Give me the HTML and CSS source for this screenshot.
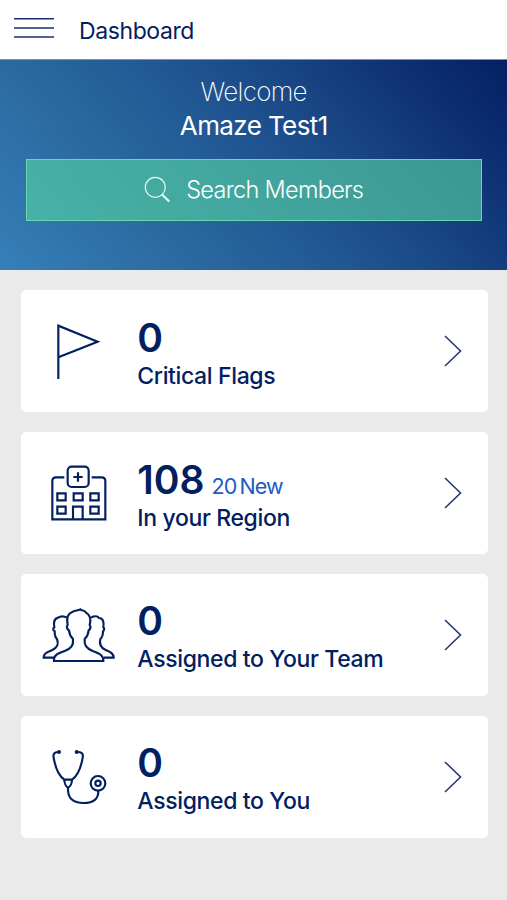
FILE: index.html
```html
<!DOCTYPE html>
<html lang="en">
<head>
  <meta charset="utf-8">
  <title>Dashboard</title>
  <link rel="stylesheet" href="styles.css">
</head>
<body>
  <header class="topbar">
    <svg class="menu" viewBox="0 0 40 22">
      <path d="M0 1.8h40M0 11h40M0 20h40" />
    </svg>
    <h1 class="title">Dashboard</h1>
  </header>

  <section class="hero">
    <p class="welcome">Welcome</p>
    <p class="name">Amaze Test1</p>
    <div class="search">
      <svg class="search-icon" viewBox="0 0 28 28">
        <circle cx="11.3" cy="11.3" r="10" stroke-width="1.2" />
        <path d="M18 18.5l7.3 7" stroke-width="2.2" />
      </svg>
      <span class="search-text">Search Members</span>
    </div>
  </section>

  <main class="cards">
    <div class="card">
      <svg class="icon" viewBox="60 93 240 210">
        <path d="M115 282V122L233 170L117 216" />
      </svg>
      <div class="info">
        <p class="count">0</p>
        <p class="label">Critical Flags</p>
      </div>
      <svg class="arrow" viewBox="0 0 18 32"><path d="M1 1l15.5 15L1 31" /></svg>
    </div>

    <div class="card">
      <svg class="icon" viewBox="30 24 240 210">
        <path d="M103 82H78Q67 82 67 93V208H226V93Q226 82 215 82H185" />
        <rect x="113" y="50" width="63" height="61" rx="12" />
        <path d="M144 67v28M130 81h28" />
        <path d="M82 130h25v21h-25zM131 130h27v21h-27zM181 130h25v21h-25z" />
        <path d="M82 170h25v21h-25zM181 170h25v21h-25zM129 208v-38h29v38" />
      </svg>
      <div class="info">
        <p class="count">108<span class="new">20<span>New</span></span></p>
        <p class="label">In your Region</p>
      </div>
      <svg class="arrow" viewBox="0 0 18 32"><path d="M1 1l15.5 15L1 31" /></svg>
    </div>

    <div class="card">
      <svg class="icon" viewBox="30 15 240 210">
        <path d="M72 198C70 180 84 175 104 168C124 160 131 151 129 132C122 125 118 117 117 106C110 102 109 94 113 90C109 70 113 55 128 50C138 46 145 47 151 43C155 48 166 45 168 53C180 60 184 72 179 90C183 96 181 102 176 106C175 117 170 126 164 132C162 150 168 159 188 168C208 175 221 181 220 198Z" />
        <path d="M72 188H41C41 174 53 171 67 165C83 157 87 148 81 132C76 128 74 119 74 109C68 106 69 99 73 97C70 81 72 71 84 68C93 62 102 63 111 68" />
        <path d="M221 188H251C250 174 240 171 227 165C211 158 207 148 211 132C217 127 219 119 219 109C224 105 223 99 220 97C223 80 218 69 207 69C203 62 192 63 183 68" />
      </svg>
      <div class="info">
        <p class="count">0</p>
        <p class="label">Assigned to Your Team</p>
      </div>
      <svg class="arrow" viewBox="0 0 18 32"><path d="M1 1l15.5 15L1 31" /></svg>
    </div>

    <div class="card">
      <svg class="icon" viewBox="30 21 240 210">
        <path d="M87 51C76 51 68 54 71 68C76 98 84 121 103 134H126C145 121 153 98 158 68C161 54 153 51 142 51" />
        <path d="M103 134C103 144 108 155 114 158C121 155 126 144 126 134" />
        <path d="M114 158C112 190 129 204 161 204C191 204 206 191 205 167" />
        <circle class="tip" cx="87" cy="51" r="6" />
        <circle class="tip" cx="140" cy="51" r="6" />
        <circle cx="204" cy="145" r="22" />
        <circle cx="204" cy="145" r="8" />
      </svg>
      <div class="info">
        <p class="count">0</p>
        <p class="label">Assigned to You</p>
      </div>
      <svg class="arrow" viewBox="0 0 18 32"><path d="M1 1l15.5 15L1 31" /></svg>
    </div>
  </main>
</body>
</html>
```
FILE: styles.css
```css
* {
  box-sizing: border-box;
}

body {
  margin: 0;
  min-height: 900px;
  background-color: #eaeaea;
  color: #02205f;
  font-family: Inter, "Liberation Sans", sans-serif;
}

p,
h1 {
  margin: 0;
}

svg {
  fill: none;
  stroke: #02205f;
  flex: none;
}

.topbar {
  display: flex;
  align-items: center;
  height: 59px;
  padding: 2px 13.5px 0;
  background-color: #fff;
}

.menu {
  width: 40px;
  height: 22px;
  margin: -5px 25.5px 0 0;
  stroke: #1b2f6e;
  stroke-width: 1.6;
}

.title {
  font-size: 23px;
  font-weight: 400;
  letter-spacing: -0.4px;
}

.hero {
  height: 211px;
  padding: 18px 25.5px 0 26px;
  border-top: 1px solid #6f93bb;
  background: linear-gradient(48deg, #367fb9 0%, #2a699f 29%, #215793 50%, #194685 66%, #143e7d 73%, #0c2d71 87%, #052063 100%);
  color: #fff;
  text-align: center;
}

.welcome {
  font-size: 26px;
  font-weight: 200;
  line-height: 28px;
  letter-spacing: -0.7px;
}

.name {
  margin-top: 5px;
  font-size: 26px;
  line-height: 30px;
  letter-spacing: -0.6px;
}

.search {
  display: flex;
  align-items: center;
  justify-content: center;
  height: 62px;
  margin-top: 18px;
  border: 1.5px solid #65d8ae;
  background-color: rgba(85, 211, 163, 0.63);
}

.search-icon {
  width: 28px;
  height: 28px;
  margin-right: 14px;
  stroke: #e8fbf5;
}

.search-text {
  margin-top: -1px;
  font-size: 23.5px;
  font-weight: 300;
  letter-spacing: -0.7px;
}

.cards {
  display: flex;
  flex-direction: column;
  gap: 19.6px;
  padding: 20.2px 19.5px 0 20.5px;
}

.card {
  display: flex;
  align-items: center;
  height: 122.2px;
  padding: 0 26px 0 19.3px;
  border-radius: 5px;
  background-color: #fff;
}

.icon {
  width: 80px;
  height: 70px;
  stroke-width: 6.5;
}

.tip {
  fill: #02205f;
  stroke: none;
}

.info {
  flex: 1;
  padding: 5px 0 0 17.5px;
  white-space: nowrap;
}

.count {
  display: flex;
  align-items: baseline;
  height: 44px;
  font-size: 39px;
  font-weight: 600;
  line-height: 44px;
}

.new {
  margin-left: 7px;
  color: #1b5bc4;
  font-size: 21.5px;
  font-weight: 400;
  letter-spacing: -0.9px;
}

.new span {
  margin-left: 3px;
}

.label {
  font-size: 23px;
  font-weight: 500;
  line-height: 32px;
  letter-spacing: -0.36px;
}

.arrow {
  width: 18px;
  height: 32px;
  stroke: #2a3878;
  stroke-width: 1.6;
}
```
